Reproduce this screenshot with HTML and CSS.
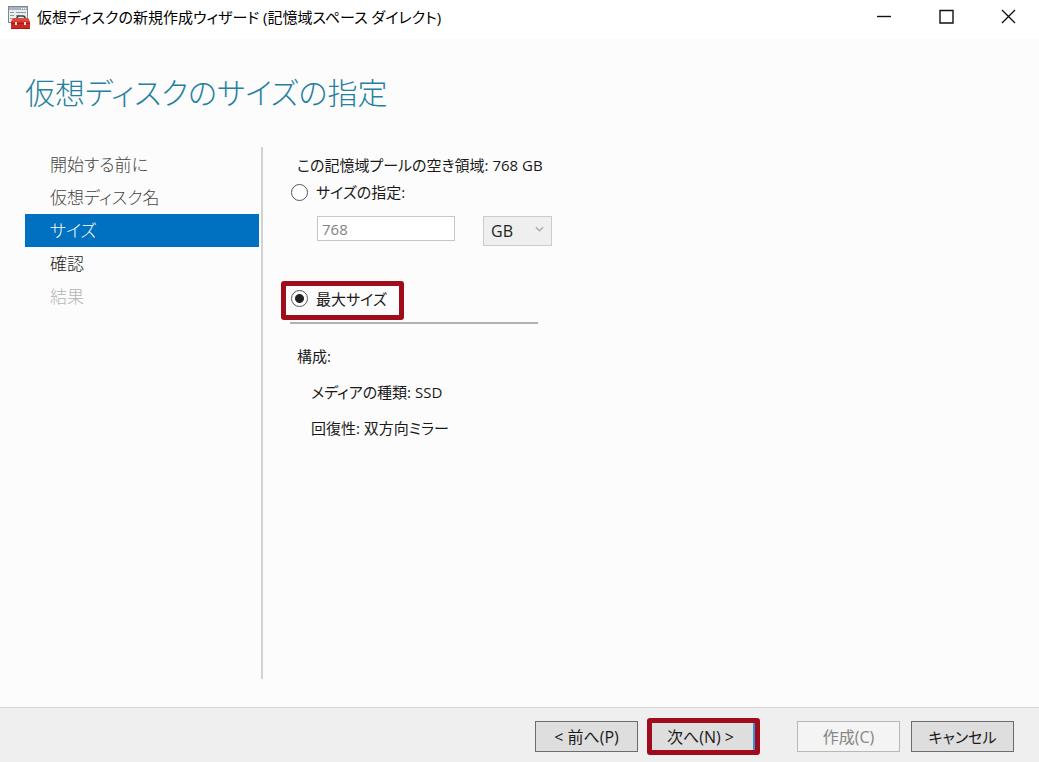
FILE: index.html
```html
<!DOCTYPE html>
<html lang="ja">
<head>
<meta charset="utf-8">
<meta name="viewport" content="width=device-width, initial-scale=1">
<title>仮想ディスクの新規作成ウィザード</title>
<link rel="stylesheet" href="styles.css">
</head>
<body>
<header class="titlebar">
  <svg class="app-icon" viewBox="0 0 22 23" aria-hidden="true">
    <rect x="0.5" y="0.5" width="19" height="16" fill="#e9edf0" stroke="#7b8794"/>
    <rect x="1" y="1" width="18" height="3" fill="#a9b4be"/>
    <path d="M13 2.500h1M15 2.500h1M17 2.500h1" stroke="#fff"/>
    <path d="M2 6.500h4M8 6.500h10M2 9.500h4M8 9.500h3M2 12.500h2" stroke="#8d98a3"/>
    <path d="M9 12.500q0-2.500 2-2.500h4q2 0 2 2.500" fill="none" stroke="#3a3f44" stroke-width="1.6"/>
    <path d="M5 12h15l2 4v7H3v-7z" fill="#cf2a22"/>
    <path d="M5 12h15l1.500 3.500h-18z" fill="#dc4a3f"/>
    <path d="M3 17.500h19" stroke="#a81d16"/>
    <path d="M3 22.500h19" stroke="#a31b14"/>
    <rect x="7" y="16" width="2" height="3" fill="#f5dedb"/>
    <rect x="16" y="16" width="2" height="3" fill="#f5dedb"/>
  </svg>
  <span class="window-title">仮想ディスクの新規作成ウィザード (記憶域スペース ダイレクト)</span>
  <div class="window-controls">
    <button class="window-button" type="button" aria-label="最小化"><svg viewBox="0 0 16 16"><path d="M1 7.500h14"/></svg></button>
    <button class="window-button" type="button" aria-label="最大化"><svg viewBox="0 0 16 16"><path d="M2 1.500h13v12.500h-13z"/></svg></button>
    <button class="window-button" type="button" aria-label="閉じる"><svg viewBox="0 0 16 16"><path d="M2 1l13 13M15 1L2 14"/></svg></button>
  </div>
</header>
<main class="wizard">
  <h1 class="page-title">仮想ディスクのサイズの指定</h1>
  <div class="wizard-body">
    <nav class="steps">
      <ol class="step-list">
        <li class="step step-done">開始する前に</li>
        <li class="step step-done">仮想ディスク名</li>
        <li class="step step-current" aria-current="step">サイズ</li>
        <li class="step">確認</li>
        <li class="step step-disabled">結果</li>
      </ol>
    </nav>
    <form class="size-form">
      <p class="free-space">この記憶域プールの空き領域: 768 GB</p>
      <label class="option"><input class="radio" type="radio" name="size">サイズの指定:</label>
      <div class="size-row">
        <input class="size-input" type="text" value="768" aria-label="サイズ" disabled>
        <span class="unit">
          <select class="unit-select" aria-label="単位" disabled><option>GB</option></select>
          <svg class="chevron" viewBox="0 0 10 6" aria-hidden="true"><path d="M1 1l4 4l4-4"/></svg>
        </span>
      </div>
      <label class="option option-marked"><input class="radio" type="radio" name="size" checked>最大サイズ</label>
      <hr class="divider">
      <section class="config">
        <h2 class="config-title">構成:</h2>
        <p class="config-item">メディアの種類: SSD</p>
        <p class="config-item">回復性: 双方向ミラー</p>
      </section>
    </form>
  </div>
</main>
<footer class="actions">
  <button class="action" type="button">&lt; 前へ(P)</button>
  <span class="marked"><button class="action action-next" type="button">次へ(N) &gt;</button></span>
  <button class="action action-create" type="button" disabled>作成(C)</button>
  <button class="action action-cancel" type="button">キャンセル</button>
</footer>
</body>
</html>
```
FILE: styles.css
```css
* {
  box-sizing: border-box;
}

body {
  display: flex;
  flex-direction: column;
  min-height: 100vh;
  margin: 0;
  background: #fcfcfc;
  color: #1a1a1a;
  font: 15px/24px "Open Sans", "Noto Sans CJK JP", sans-serif;
  font-feature-settings: "palt";
}

button,
input,
select {
  font: inherit;
  font-feature-settings: inherit;
}

.titlebar {
  display: flex;
  align-items: center;
  height: 39px;
  padding: 0 0 5px 8px;
  background: #fff;
}

.app-icon {
  width: 22px;
  height: 23px;
  margin-right: 7px;
}

.window-title {
  color: #000;
  white-space: nowrap;
}

.window-controls {
  display: flex;
  margin-left: auto;
}

.window-button {
  display: flex;
  align-items: center;
  justify-content: center;
  width: 62px;
  height: 34px;
  padding: 0;
  border: 0;
  background: transparent;
}

.window-button svg {
  width: 16px;
  height: 16px;
  fill: none;
  stroke: #111;
  stroke-width: 1.4;
}

.wizard {
  display: flex;
  flex: 1;
  flex-direction: column;
  padding: 32px 24px 28px 25px;
}

.page-title {
  margin: 0 0 32px;
  color: #2580a0;
  font-size: 30px;
  font-weight: 300;
  line-height: 44px;
}

.wizard-body {
  display: flex;
  flex: 1;
}

.steps {
  width: 238px;
  padding-right: 2px;
  border-right: 2px solid #d2d2d2;
}

.step-list {
  margin: 0;
  padding: 1px 0 0;
  list-style: none;
}

.step {
  padding-left: 25px;
  font-size: 17px;
  font-weight: 300;
  line-height: 33px;
}

.step-done {
  color: #444;
}

.step-current {
  background: #0070c0;
  color: #fff;
}

.step-disabled {
  color: #b4b4b4;
}

.size-form {
  display: flex;
  flex: 1;
  flex-direction: column;
  align-items: flex-start;
  padding: 6px 0 0 18px;
}

.free-space {
  margin: 0 0 3px 16px;
}

.option {
  display: flex;
  align-items: center;
  gap: 8px;
  margin-left: 10px;
}

.radio {
  width: 17px;
  height: 17px;
  margin: 0;
  border: 1px solid #555;
  border-radius: 50%;
  appearance: none;
  background: #fff;
}

.radio:checked {
  background: radial-gradient(circle, #222 4px, #fff 5px);
}

.size-row {
  display: flex;
  gap: 28px;
  margin: 12px 0 35px 36px;
}

.size-input {
  width: 138px;
  height: 25px;
  padding: 0 4px;
  border: 1px solid #c4c8cc;
  background: #fff;
  color: #838383;
}

.unit {
  display: grid;
  align-items: center;
}

.unit-select {
  grid-area: 1 / 1;
  width: 69px;
  height: 30px;
  padding: 0 7px;
  border: 1px solid #ccc;
  border-radius: 0;
  appearance: none;
  background: #efefef;
  color: #222;
  font-size: 16px;
  opacity: 1;
}

.chevron {
  grid-area: 1 / 1;
  justify-self: end;
  width: 9px;
  height: 6px;
  margin: 0 8px 4px 0;
  fill: none;
  stroke: #aaa;
  stroke-width: 1.5;
}

.option-marked {
  height: 39px;
  margin-left: 0;
  padding: 0 12px 4px 5px;
  border: 5px solid #a00c1c;
  border-radius: 3px;
}

.divider {
  width: 248px;
  height: 2px;
  margin: 2px 0 20px 9px;
  border: 0;
  background: #b2b2b2;
}

.config {
  margin-left: 16px;
}

.config-title {
  margin: 0;
  font-size: 15px;
  font-weight: 400;
}

.config-item {
  margin: 12px 0 0 14px;
}

.actions {
  display: flex;
  align-items: center;
  justify-content: flex-end;
  height: 55px;
  padding: 3px 25px 0;
  border-top: 1px solid #d8d8d8;
  background: #efefef;
}

.action {
  width: 103px;
  height: 31px;
  padding: 0;
  border: 1px solid #6c6c6c;
  background: #dedede;
  color: #1a1a1a;
  font-size: 16px;
}

.marked {
  display: flex;
  margin: 0 37px 0 9px;
  border: 5px solid #a00c1c;
  border-radius: 3px;
}

.action-next {
  height: 27px;
  padding-right: 4px;
  border: 0;
  border-right: 2px solid #3c8ddb;
}

.action-create {
  margin-right: 11px;
  border-color: #b8b8b8;
  background: #f4f4f4;
  color: #858585;
}

.action-cancel {
  font-size: 15px;
}
```
